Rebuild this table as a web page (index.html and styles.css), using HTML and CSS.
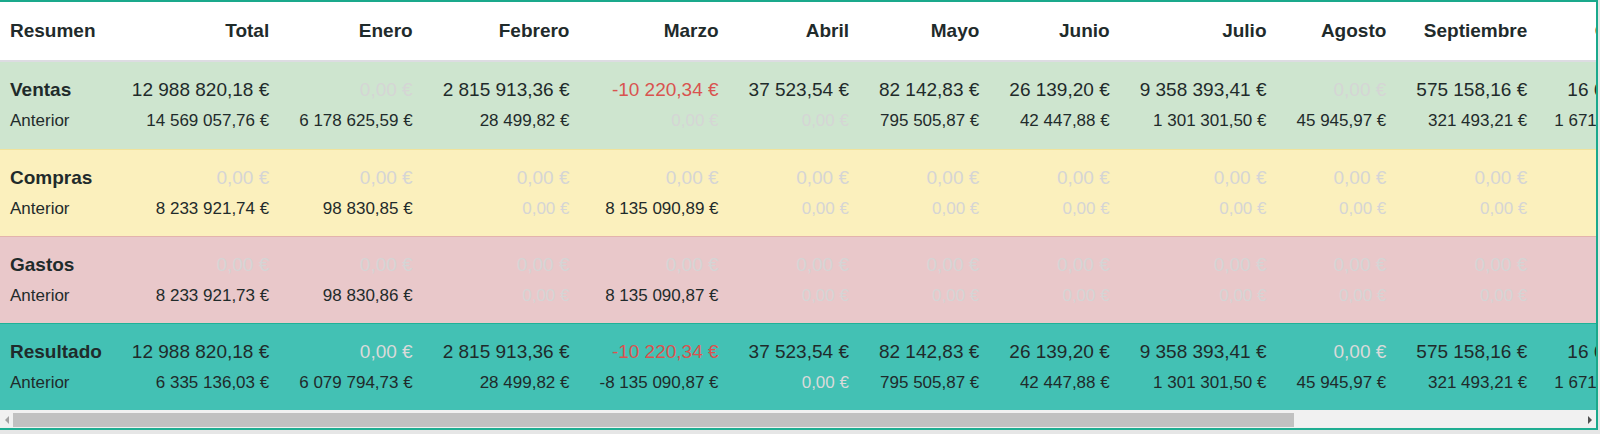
FILE: index.html
```html
<!DOCTYPE html>
<html lang="es">
<head>
<meta charset="utf-8">
<title>Resumen</title>
<link rel="stylesheet" href="styles.css">
</head>
<body>
<div class="panel">
  <div class="viewport">
    <table class="summary">
      <thead>
        <tr>
          <th class="label">Resumen</th>
          <th>Total</th><th>Enero</th><th>Febrero</th><th>Marzo</th><th>Abril</th><th>Mayo</th><th>Junio</th><th>Julio</th><th>Agosto</th><th>Septiembre</th><th class="oct">Octubre</th><th>Noviembre</th><th>Diciembre</th>
        </tr>
      </thead>
      <tbody>
        <tr class="sec ventas">
          <td class="label"><div class="main">Ventas</div><div class="prev">Anterior</div></td>
          <td><div class="main">12&nbsp;988&nbsp;820,18&nbsp;€</div><div class="prev">14&nbsp;569&nbsp;057,76&nbsp;€</div></td>
          <td><div class="main zero">0,00&nbsp;€</div><div class="prev">6&nbsp;178&nbsp;625,59&nbsp;€</div></td>
          <td><div class="main">2&nbsp;815&nbsp;913,36&nbsp;€</div><div class="prev">28&nbsp;499,82&nbsp;€</div></td>
          <td><div class="main neg">-10&nbsp;220,34&nbsp;€</div><div class="prev zero">0,00&nbsp;€</div></td>
          <td><div class="main">37&nbsp;523,54&nbsp;€</div><div class="prev zero">0,00&nbsp;€</div></td>
          <td><div class="main">82&nbsp;142,83&nbsp;€</div><div class="prev">795&nbsp;505,87&nbsp;€</div></td>
          <td><div class="main">26&nbsp;139,20&nbsp;€</div><div class="prev">42&nbsp;447,88&nbsp;€</div></td>
          <td><div class="main">9&nbsp;358&nbsp;393,41&nbsp;€</div><div class="prev">1&nbsp;301&nbsp;301,50&nbsp;€</div></td>
          <td><div class="main zero">0,00&nbsp;€</div><div class="prev">45&nbsp;945,97&nbsp;€</div></td>
          <td><div class="main">575&nbsp;158,16&nbsp;€</div><div class="prev">321&nbsp;493,21&nbsp;€</div></td>
          <td class="oct"><div class="main">16&nbsp;684,12&nbsp;€</div><div class="prev">1&nbsp;671&nbsp;208,44&nbsp;€</div></td>
          <td><div class="main zero">0,00&nbsp;€</div><div class="prev">2&nbsp;104&nbsp;377,90&nbsp;€</div></td>
          <td><div class="main zero">0,00&nbsp;€</div><div class="prev">1&nbsp;932&nbsp;106,35&nbsp;€</div></td>
        </tr>
        <tr class="sec compras">
          <td class="label"><div class="main">Compras</div><div class="prev">Anterior</div></td>
          <td><div class="main zero">0,00&nbsp;€</div><div class="prev">8&nbsp;233&nbsp;921,74&nbsp;€</div></td>
          <td><div class="main zero">0,00&nbsp;€</div><div class="prev">98&nbsp;830,85&nbsp;€</div></td>
          <td><div class="main zero">0,00&nbsp;€</div><div class="prev zero">0,00&nbsp;€</div></td>
          <td><div class="main zero">0,00&nbsp;€</div><div class="prev">8&nbsp;135&nbsp;090,89&nbsp;€</div></td>
          <td><div class="main zero">0,00&nbsp;€</div><div class="prev zero">0,00&nbsp;€</div></td>
          <td><div class="main zero">0,00&nbsp;€</div><div class="prev zero">0,00&nbsp;€</div></td>
          <td><div class="main zero">0,00&nbsp;€</div><div class="prev zero">0,00&nbsp;€</div></td>
          <td><div class="main zero">0,00&nbsp;€</div><div class="prev zero">0,00&nbsp;€</div></td>
          <td><div class="main zero">0,00&nbsp;€</div><div class="prev zero">0,00&nbsp;€</div></td>
          <td><div class="main zero">0,00&nbsp;€</div><div class="prev zero">0,00&nbsp;€</div></td>
          <td class="oct"><div class="main zero">0,00&nbsp;€</div><div class="prev zero">0,00&nbsp;€</div></td>
          <td><div class="main zero">0,00&nbsp;€</div><div class="prev zero">0,00&nbsp;€</div></td>
          <td><div class="main zero">0,00&nbsp;€</div><div class="prev zero">0,00&nbsp;€</div></td>
        </tr>
        <tr class="sec gastos">
          <td class="label"><div class="main">Gastos</div><div class="prev">Anterior</div></td>
          <td><div class="main zero">0,00&nbsp;€</div><div class="prev">8&nbsp;233&nbsp;921,73&nbsp;€</div></td>
          <td><div class="main zero">0,00&nbsp;€</div><div class="prev">98&nbsp;830,86&nbsp;€</div></td>
          <td><div class="main zero">0,00&nbsp;€</div><div class="prev zero">0,00&nbsp;€</div></td>
          <td><div class="main zero">0,00&nbsp;€</div><div class="prev">8&nbsp;135&nbsp;090,87&nbsp;€</div></td>
          <td><div class="main zero">0,00&nbsp;€</div><div class="prev zero">0,00&nbsp;€</div></td>
          <td><div class="main zero">0,00&nbsp;€</div><div class="prev zero">0,00&nbsp;€</div></td>
          <td><div class="main zero">0,00&nbsp;€</div><div class="prev zero">0,00&nbsp;€</div></td>
          <td><div class="main zero">0,00&nbsp;€</div><div class="prev zero">0,00&nbsp;€</div></td>
          <td><div class="main zero">0,00&nbsp;€</div><div class="prev zero">0,00&nbsp;€</div></td>
          <td><div class="main zero">0,00&nbsp;€</div><div class="prev zero">0,00&nbsp;€</div></td>
          <td class="oct"><div class="main zero">0,00&nbsp;€</div><div class="prev zero">0,00&nbsp;€</div></td>
          <td><div class="main zero">0,00&nbsp;€</div><div class="prev zero">0,00&nbsp;€</div></td>
          <td><div class="main zero">0,00&nbsp;€</div><div class="prev zero">0,00&nbsp;€</div></td>
        </tr>
        <tr class="sec resultado">
          <td class="label"><div class="main">Resultado</div><div class="prev">Anterior</div></td>
          <td><div class="main">12&nbsp;988&nbsp;820,18&nbsp;€</div><div class="prev">6&nbsp;335&nbsp;136,03&nbsp;€</div></td>
          <td><div class="main zero">0,00&nbsp;€</div><div class="prev">6&nbsp;079&nbsp;794,73&nbsp;€</div></td>
          <td><div class="main">2&nbsp;815&nbsp;913,36&nbsp;€</div><div class="prev">28&nbsp;499,82&nbsp;€</div></td>
          <td><div class="main neg">-10&nbsp;220,34&nbsp;€</div><div class="prev">-8&nbsp;135&nbsp;090,87&nbsp;€</div></td>
          <td><div class="main">37&nbsp;523,54&nbsp;€</div><div class="prev zero">0,00&nbsp;€</div></td>
          <td><div class="main">82&nbsp;142,83&nbsp;€</div><div class="prev">795&nbsp;505,87&nbsp;€</div></td>
          <td><div class="main">26&nbsp;139,20&nbsp;€</div><div class="prev">42&nbsp;447,88&nbsp;€</div></td>
          <td><div class="main">9&nbsp;358&nbsp;393,41&nbsp;€</div><div class="prev">1&nbsp;301&nbsp;301,50&nbsp;€</div></td>
          <td><div class="main zero">0,00&nbsp;€</div><div class="prev">45&nbsp;945,97&nbsp;€</div></td>
          <td><div class="main">575&nbsp;158,16&nbsp;€</div><div class="prev">321&nbsp;493,21&nbsp;€</div></td>
          <td class="oct"><div class="main">16&nbsp;684,12&nbsp;€</div><div class="prev">1&nbsp;671&nbsp;208,44&nbsp;€</div></td>
          <td><div class="main zero">0,00&nbsp;€</div><div class="prev">2&nbsp;104&nbsp;377,90&nbsp;€</div></td>
          <td><div class="main zero">0,00&nbsp;€</div><div class="prev">1&nbsp;932&nbsp;106,35&nbsp;€</div></td>
        </tr>
      </tbody>
    </table>
  </div>
  <div class="scrollbar">
    <div class="sb-btn"><span class="arrow-left"></span></div>
    <div class="sb-track"><div class="sb-thumb"></div></div>
    <div class="sb-btn"><span class="arrow-right"></span></div>
  </div>
</div>
</body>
</html>
```

FILE: styles.css
```css
html, body {
  margin: 0;
  padding: 0;
}
body {
  background: #e6e6e6;
  font-family: "Liberation Sans", Arial, sans-serif;
  color: #1f2b2b;
  height: 434px;
  overflow: hidden;
}
.panel {
  width: 1596px;
  border-top: 2px solid #1aa98c;
  border-right: 2px solid #1aa98c;
  border-bottom: 2px solid #1fae92;
  background: #fff;
}
.viewport {
  overflow: hidden;
  width: 1596px;
}
.summary {
  border-collapse: separate;
  border-spacing: 0;
  white-space: nowrap;
}
.summary th {
  height: 58px;
  padding: 0 15px;
  font-size: 19px;
  font-weight: bold;
  text-align: right;
  vertical-align: middle;
  border-bottom: 2px solid #dddce2;
  background: #fff;
}
.summary th.label,
.summary td.label {
  text-align: left;
  padding-left: 10px;
}
.summary td {
  padding: 15px 15px 15px;
  text-align: right;
  vertical-align: top;
  border-top: 1px solid transparent;
}
.summary .ventas td {
  border-top: 0;
  padding-bottom: 16px;
}
.summary .oct {
  padding-left: 12px;
  padding-right: 8px;
}
.main {
  font-size: 19px;
  line-height: 26px;
}
.prev {
  font-size: 17px;
  line-height: 24px;
  margin-top: 6px;
}
.label .main {
  font-weight: bold;
}
.zero {
  color: #d5d5d5;
}
.neg {
  color: #d9534f;
}
.ventas td { background: #cee5cf; }
.compras td { background: #fbf0bd; border-top-color: #f1e39c; }
.gastos td { background: #e9c8ca; border-top-color: #e3b3ac; }
.resultado td { background: #43c1b4; border-top-color: #1fb297; }
.resultado .zero { color: #dadada; }

.scrollbar {
  display: flex;
  height: 18px;
  background: #f1f1f1;
}
.sb-btn {
  width: 13px;
  display: flex;
  align-items: center;
  justify-content: center;
}
.sb-track {
  flex: 1;
  padding: 3px 0 1px;
}
.sb-thumb {
  width: 1281px;
  height: 14px;
  background: #c1c1c1;
}
.arrow-left {
  width: 0;
  height: 0;
  border-top: 4px solid transparent;
  border-bottom: 4px solid transparent;
  border-right: 4px solid #a3a3a3;
  margin-top: 2px;
}
.arrow-right {
  width: 0;
  height: 0;
  border-top: 4px solid transparent;
  border-bottom: 4px solid transparent;
  border-left: 4px solid #505050;
  margin-top: 2px;
}
```
